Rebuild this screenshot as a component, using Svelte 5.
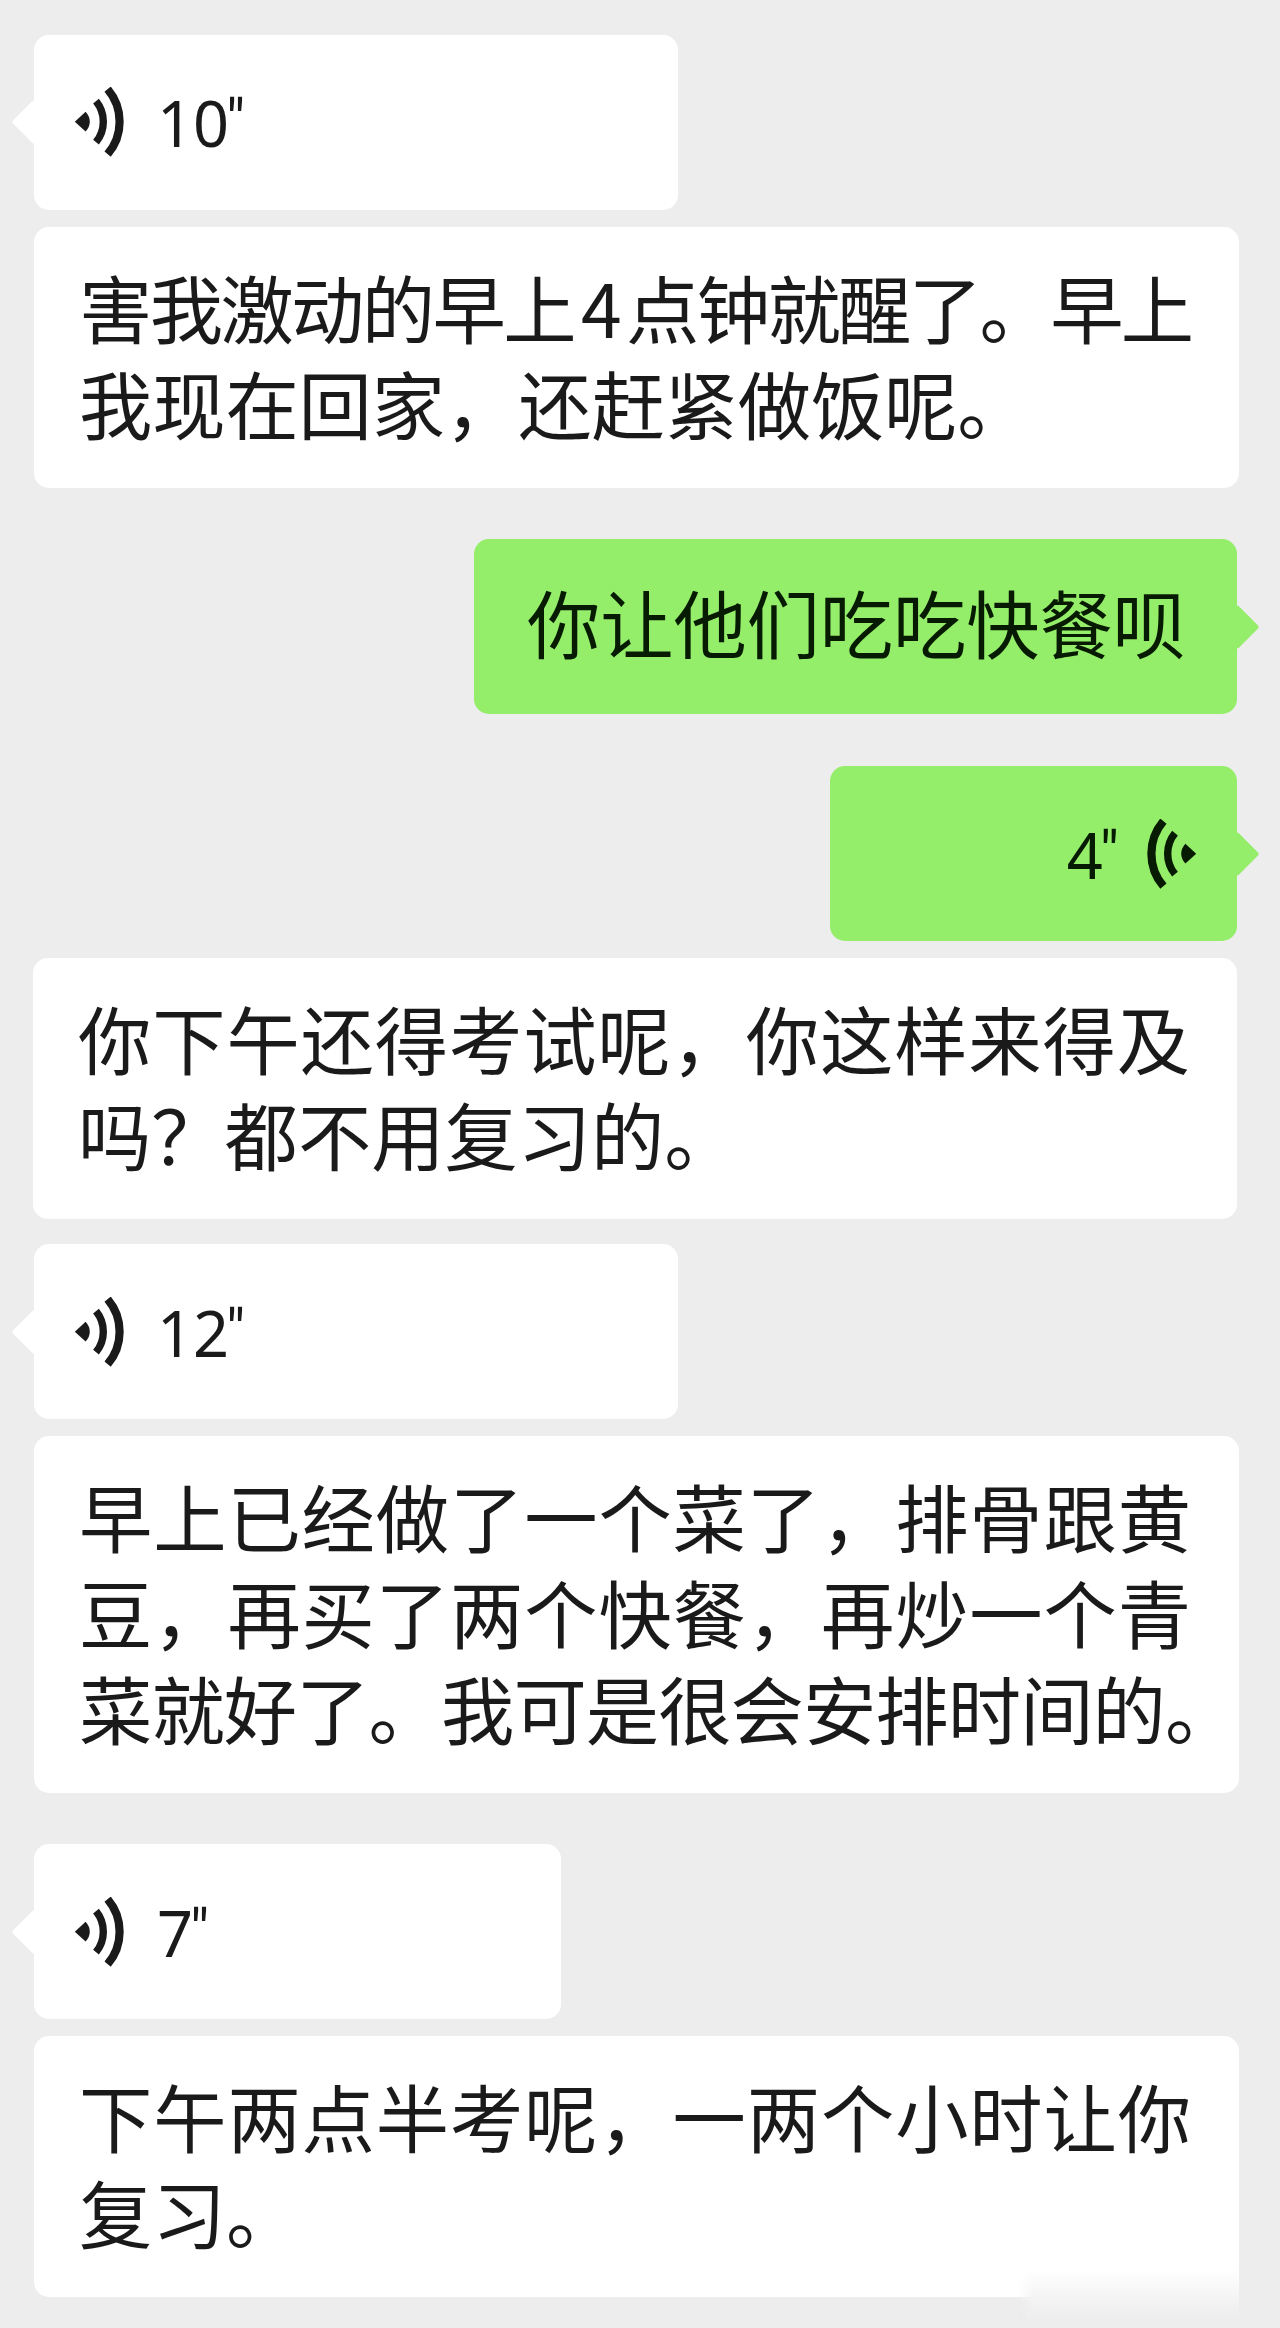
<script lang="ts">
    type Line = { text: string; spacing: number };
    type Message = {
        mine?: boolean;
        gap: number;
        width: number;
        shift?: number;
        seconds?: number;
        lines?: Line[];
    };

    const messages: Message[] = [
        { gap: 34.5, width: 644, seconds: 10 },
        { gap: 17, width: 1205, lines: [
            { text: '害我激动的早上4点钟就醒了。早上', spacing: -2.6 },
            { text: '我现在回家，还赶紧做饭呢。', spacing: -0.1 }
        ] },
        { gap: 51.5, width: 763, mine: true, lines: [
            { text: '你让他们吃吃快餐呗', spacing: -0.1 }
        ] },
        { gap: 52, width: 407, mine: true, seconds: 4 },
        { gap: 17, width: 1204, shift: -1, lines: [
            { text: '你下午还得考试呢，你这样来得及', spacing: 0.9 },
            { text: '吗？都不用复习的。', spacing: 0 }
        ] },
        { gap: 25, width: 644, seconds: 12 },
        { gap: 17, width: 1205, lines: [
            { text: '早上已经做了一个菜了，排骨跟黄', spacing: 0.9 },
            { text: '豆，再买了两个快餐，再炒一个青', spacing: 0.9 },
            { text: '菜就好了。我可是很会安排时间的。', spacing: -0.9 }
        ] },
        { gap: 51, width: 527, seconds: 7 },
        { gap: 17, width: 1205, lines: [
            { text: '下午两点半考呢，一两个小时让你', spacing: 0.9 },
            { text: '复习。', spacing: 0.2 }
        ] }
    ];

    // digits get a little air when they stand between chinese characters
    const split = (text: string) => text.split(/(\d+)/);
</script>

<div class="chat">
    {#each messages as msg}
        <div class="row" class:mine={msg.mine} style="padding-top:{msg.gap}px">
            <div class="bubble" class:voice={msg.seconds} class:single={msg.lines?.length == 1}
                style="width:{msg.width}px;margin-left:{msg.shift ?? 0}px">
                {#if msg.seconds}
                    <svg class="waves" viewBox="0 0 50 70">
                        <path class="dot" d="M0.8 34.7L11.6 24.8Q15.8 29.5 15.8 34.7T11.6 44.6Z" />
                        <path class="inner" d="M22 14.2A32.4 32.4 0 0 1 22 55.2" />
                        <path class="outer" d="M33.6 2.2A50 50 0 0 1 33.6 67.2" />
                    </svg>
                    <span class="seconds">{msg.seconds}<span class="quote">"</span></span>
                {:else}
                    {#each msg.lines ?? [] as line}
                        <p style="letter-spacing:{line.spacing}px">{#each split(line.text) as part, i}{#if i % 2}<span class="num">{part}</span>{:else}{part}{/if}{/each}</p>
                    {/each}
                {/if}
            </div>
        </div>
    {/each}
    <div class="smudge"></div>
</div>

<style>
    :global(body) {
        background-color: #ededed;
    }
    .chat {
        position: relative;
        box-sizing: border-box;
        width: 1280px;
        height: 2328px;
        overflow: hidden;
        padding: 0 43px 0 34px;
        background-color: #ededed;
        color: #1a1a1a;
        font-family: "Noto Sans CJK SC", sans-serif;
    }
    .row {
        display: flex;
    }
    .row.mine {
        justify-content: flex-end;
    }
    .bubble {
        position: relative;
        box-sizing: border-box;
        flex: none;
        padding: 31px 0 38px 45px;
        border-radius: 15px;
        background-color: #fff;
    }
    .mine .bubble {
        background-color: #94ee6a;
        color: #071a02;
    }
    .bubble.single {
        padding: 34px 0 45px 53px;
    }
    .bubble.voice {
        display: flex;
        align-items: center;
        gap: 33px;
        height: 175px;
        padding: 0 40px;
    }
    .mine .bubble.voice {
        flex-direction: row-reverse;
        gap: 28px;
    }
    /* tail of the bubble: a square turned by 45 degrees */
    .bubble.voice::before,
    .bubble.single::before {
        content: "";
        position: absolute;
        top: 50%;
        left: -16px;
        width: 32px;
        height: 32px;
        margin-top: -16px;
        border-radius: 3px;
        background-color: inherit;
        transform: rotate(45deg);
    }
    .mine .bubble::before {
        left: auto;
        right: -16px;
    }
    p {
        margin: 0;
        font-size: 73.3px;
        line-height: 96px;
        white-space: nowrap;
    }
    .num {
        padding: 0 7px 0 7px;
    }
    .waves {
        flex: none;
        width: 50px;
        height: 70px;
        fill: none;
        stroke: currentColor;
    }
    .mine .waves {
        transform: scaleX(-1);
    }
    .dot {
        fill: currentColor;
        stroke: none;
    }
    .inner {
        stroke-width: 7.4;
    }
    .outer {
        stroke-width: 8.2;
    }
    .seconds {
        position: relative;
        top: 1px;
        font-family: "Noto Sans", sans-serif;
        font-size: 63px;
        line-height: 88px;
    }
    .quote {
        position: relative;
        top: -6px;
        margin-left: -3px;
        font-family: Roboto, sans-serif;
        font-size: 60px;
        line-height: 1;
    }
    .smudge {
        position: absolute;
        left: 1018px;
        top: 2270px;
        width: 221px;
        height: 50px;
        background-image: linear-gradient(#fff, #f5f5f5 50%, #ededed);
        -webkit-mask-image: linear-gradient(90deg, transparent, #000 16px);
        mask-image: linear-gradient(90deg, transparent, #000 16px);
    }
</style>
